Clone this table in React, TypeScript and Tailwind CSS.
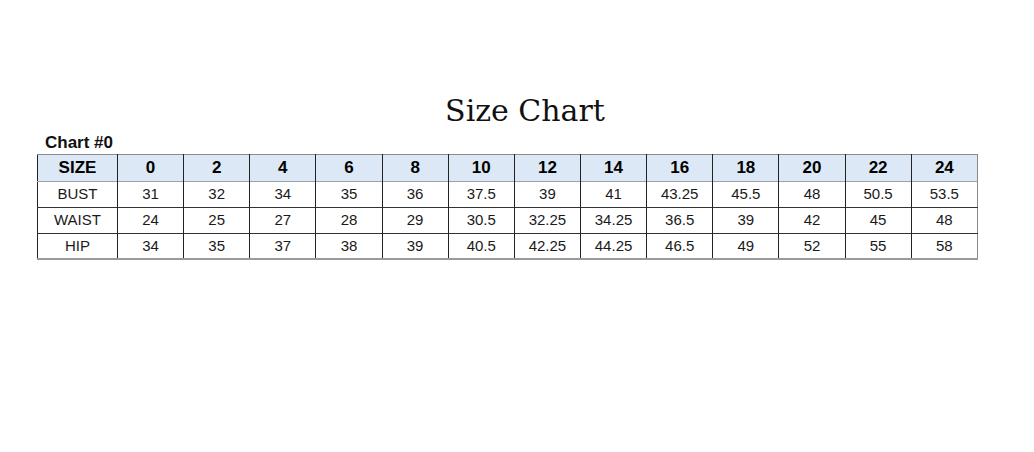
const sizes = ["0", "2", "4", "6", "8", "10", "12", "14", "16", "18", "20", "22", "24"];

const rows = [
  { name: "BUST", values: ["31", "32", "34", "35", "36", "37.5", "39", "41", "43.25", "45.5", "48", "50.5", "53.5"] },
  { name: "WAIST", values: ["24", "25", "27", "28", "29", "30.5", "32.25", "34.25", "36.5", "39", "42", "45", "48"] },
  { name: "HIP", values: ["34", "35", "37", "38", "39", "40.5", "42.25", "44.25", "46.5", "49", "52", "55", "58"] },
];

export default function App() {
  return (
    <div className="w-[1034px] h-[452px] bg-white text-black font-['Liberation_Sans',Arial,sans-serif]">
      <div className="pt-[91px] pl-[16px] text-center">
        <h1 className="font-['DejaVu_Serif',serif] text-[30px] leading-[40px] text-[#111]">Size Chart</h1>
      </div>

      <div className="pl-[37px]">
        <p className="pl-[8px] text-[17px] font-bold leading-[23px] text-[#111]">Chart #0</p>

        <table className="table-fixed border-collapse w-[941px] border-t border-r border-b-2 border-t-[#8a8a8a] border-r-[#8a8a8a] border-b-[#9a9a9a] border-l border-l-[#222]">
          <colgroup>
            <col className="w-[80px]" />
            {sizes.map((s) => (
              <col key={s} />
            ))}
          </colgroup>
          <thead>
            <tr className="h-[26px] bg-[#dce8f5] border-b border-b-[#9aa3ad]">
              <th className="p-0 text-[17px] font-bold border-r border-r-[#222]">SIZE</th>
              {sizes.map((s, i) => (
                <th
                  key={s}
                  className={
                    i === sizes.length - 1
                      ? "p-0 text-[17px] font-bold"
                      : "p-0 text-[17px] font-bold border-r border-r-[#222]"
                  }
                >
                  {s}
                </th>
              ))}
            </tr>
          </thead>
          <tbody>
            {rows.map((row, r) => (
              <tr
                key={row.name}
                className={r === rows.length - 1 ? "h-[26px]" : "h-[26px] border-b border-b-[#333]"}
              >
                <td className="p-0 pt-px text-center text-[15px] text-[#1a1a1a] border-r border-r-[#222]">{row.name}</td>
                {row.values.map((v, i) => (
                  <td
                    key={i}
                    className={
                      i === row.values.length - 1
                        ? "p-0 pt-px text-center text-[15px] text-[#1a1a1a]"
                        : "p-0 pt-px text-center text-[15px] text-[#1a1a1a] border-r border-r-[#222]"
                    }
                  >
                    {v}
                  </td>
                ))}
              </tr>
            ))}
          </tbody>
        </table>
      </div>
    </div>
  );
}
